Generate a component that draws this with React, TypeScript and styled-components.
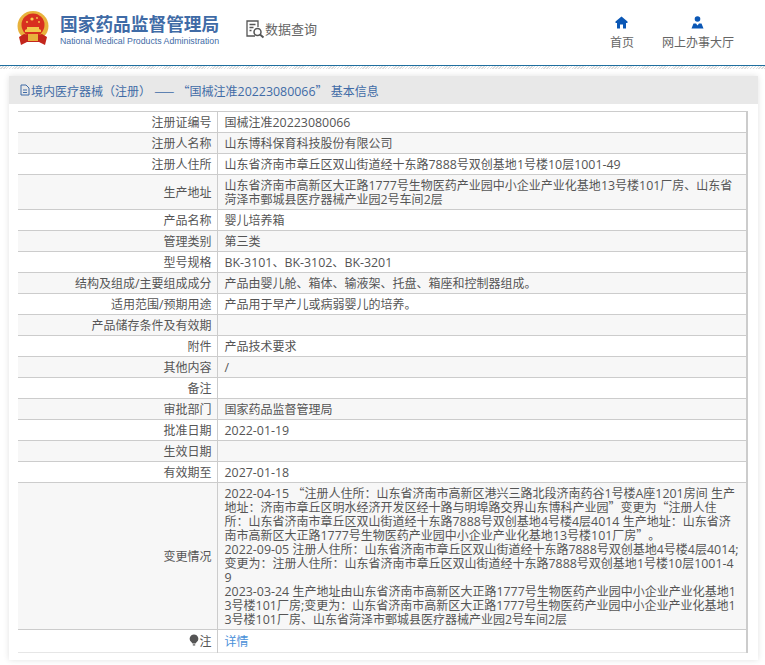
import React from "react";
import styled, { createGlobalStyle } from "styled-components";

const GlobalStyle = createGlobalStyle`
  html, body {
    margin: 0;
    padding: 0;
    background: #fff;
  }
  body {
    font-family: "Noto Sans CJK SC", "Open Sans", sans-serif;
    font-size: 12px;
    color: #555;
    text-spacing-trim: space-all;
  }
`;

const Page = styled.div`
  width: 765px;
  height: 665px;
  overflow: hidden;
`;

const Header = styled.header`
  height: 65px;
  display: flex;
  align-items: flex-start;
  border-bottom: 1px solid #1f6f9f;
`;

const Hatch = styled.div`
  height: 3px;
  background: repeating-linear-gradient(135deg, #ddd 0 1px, #fff 1px 2px);
`;

const Logo = styled.div`
  display: flex;
  align-items: flex-start;
  padding: 11px 0 0 17px;
  width: 245px;
  box-sizing: border-box;
`;

const LogoText = styled.div`
  margin-left: 11px;
`;

const LogoTitle = styled.div`
  font-weight: 700;
  font-size: 17.7px;
  line-height: 24px;
  color: #3f6ba6;
  white-space: nowrap;
`;

const LogoSub = styled.div`
  font-family: "Liberation Sans", sans-serif;
  font-size: 8.75px;
  line-height: 11px;
  margin-top: 1px;
  color: #3f6ba6;
  white-space: nowrap;
`;

const Query = styled.div`
  display: flex;
  align-items: center;
  padding-top: 19px;
  font-size: 13px;
  line-height: 20px;
  color: #666;
`;

const Nav = styled.nav`
  margin-left: auto;
  display: flex;
  padding: 16px 31px 0 0;
  gap: 28px;
`;

const NavItem = styled.div`
  display: flex;
  flex-direction: column;
  align-items: center;
  gap: 4px;
  font-size: 12px;
  line-height: 18px;
  color: #666;
`;

const Card = styled.section`
  margin: 7px 7px 0 9px;
  height: 584px;
  background: #fff;
  box-shadow: 0 0 6px rgba(0, 0, 0, 0.12);
`;

const CardTitle = styled.div`
  height: 28px;
  background: #e8e8e8;
  display: flex;
  align-items: center;
  padding-left: 10px;
  font-size: 12px;
  color: #3f6ba6;
`;

const Table = styled.table`
  margin: 7px 0 0 9px;
  width: 730px;
  border-collapse: collapse;
  table-layout: fixed;
  border-top: 1px solid #ccc;
  border-right: 2px solid #ccc;
`;

const Row = styled.tr<{ $odd: boolean }>`
  background: ${(p) => (p.$odd ? "#f7f7f7" : "#fff")};
  border-bottom: 1px solid #ccc;
`;

const LastRow = styled.tr`
  border-bottom: 1px solid #e6e6e6;
`;

const Label = styled.td`
  width: 199px;
  padding: 3px 5px 3px 0;
  box-sizing: border-box;
  text-align: right;
  line-height: 14px;
  border-right: 1px solid #ccc;
`;

const Value = styled.td`
  padding: 3px 6px 3px 7px;
  line-height: 14px;
  word-break: break-all;
  white-space: pre-line;
`;

const LastLabel = styled(Label)`
  padding: 4px 5px 4px 0;
`;

const LastValue = styled(Value)`
  padding: 4px 6px 4px 7px;
`;

const DetailLink = styled.a`
  color: #4a90d9;
`;

const Latin = styled.span`
  font-family: "Open Sans", sans-serif;
  font-size: 12.4px;
  line-height: 0;
`;

const Txt = ({ children }: { children: string }) => (
  <>
    {children
      .split(/([\x00-\x7f]+)/)
      .map((part, i) => (i % 2 === 1 && part !== "\n" ? <Latin key={i}>{part}</Latin> : part))}
  </>
);

const rows: [string, string][] = [
  ["注册证编号", "国械注准20223080066"],
  ["注册人名称", "山东博科保育科技股份有限公司"],
  ["注册人住所", "山东省济南市章丘区双山街道经十东路7888号双创基地1号楼10层1001-49"],
  ["生产地址", "山东省济南市高新区大正路1777号生物医药产业园中小企业产业化基地13号楼101厂房、山东省菏泽市鄄城县医疗器械产业园2号车间2层"],
  ["产品名称", "婴儿培养箱"],
  ["管理类别", "第三类"],
  ["型号规格", "BK-3101、BK-3102、BK-3201"],
  ["结构及组成/主要组成成分", "产品由婴儿舱、箱体、输液架、托盘、箱座和控制器组成。"],
  ["适用范围/预期用途", "产品用于早产儿或病弱婴儿的培养。"],
  ["产品储存条件及有效期", ""],
  ["附件", "产品技术要求"],
  ["其他内容", "/"],
  ["备注", ""],
  ["审批部门", "国家药品监督管理局"],
  ["批准日期", "2022-01-19"],
  ["生效日期", ""],
  ["有效期至", "2027-01-18"],
  [
    "变更情况",
    "2022-04-15 “注册人住所：山东省济南市高新区港兴三路北段济南药谷1号楼A座1201房间 生产地址：济南市章丘区明水经济开发区经十路与明埠路交界山东博科产业园”变更为“注册人住所：山东省济南市章丘区双山街道经十东路7888号双创基地4号楼4层4014 生产地址：山东省济南市高新区大正路1777号生物医药产业园中小企业产业化基地13号楼101厂房”。\n" +
      "2022-09-05 注册人住所：山东省济南市章丘区双山街道经十东路7888号双创基地4号楼4层4014;变更为：注册人住所：山东省济南市章丘区双山街道经十东路7888号双创基地1号楼10层1001-49\n" +
      "2023-03-24 生产地址由山东省济南市高新区大正路1777号生物医药产业园中小企业产业化基地13号楼101厂房;变更为：山东省济南市高新区大正路1777号生物医药产业园中小企业产业化基地13号楼101厂房、山东省菏泽市鄄城县医疗器械产业园2号车间2层",
  ],
];

const Emblem = () => (
  <svg width="32" height="35" viewBox="0 0 32 35">
    <ellipse cx="16" cy="15" rx="15.5" ry="15" fill="#e8b23c" />
    <circle cx="16" cy="14" r="11.5" fill="#d8301f" />
    <circle cx="15" cy="8" r="1.6" fill="#f5d050" />
    <circle cx="10" cy="11" r="0.9" fill="#f5d050" />
    <circle cx="20" cy="7" r="0.9" fill="#f5d050" />
    <circle cx="22" cy="11" r="0.9" fill="#f5d050" />
    <path d="M8 21h16v-2l-2-1v-2H10v2l-2 1z" fill="#f2c84b" />
    <path d="M2 26l5-3 9 2 9-2 5 3-2 8-6-3h-12l-6 3z" fill="#c3261c" />
    <path d="M11 23h10v7h-10z" fill="#e8b23c" />
  </svg>
);

const SearchIcon = () => (
  <svg width="20" height="20" viewBox="0 0 20 20" fill="none" stroke="#555" strokeWidth="1.3">
    <path d="M10 17H2V2h11v6" />
    <path d="M4.5 5.5h6M4.5 8.5h4M4.5 11.5h2" />
    <circle cx="12.5" cy="13" r="3.5" strokeWidth="1.5" />
    <path d="M15 15.5l3.5 3" strokeWidth="2" />
  </svg>
);

const HomeIcon = () => (
  <svg width="13" height="13" viewBox="0 0 13 13" fill="#0b57b5">
    <path d="M6.5 0.5L0.5 5.5V7h1.5v5.5h3V8.5h3v4h3V7h1.5V5.5z" />
  </svg>
);

const UserIcon = () => (
  <svg width="13" height="13" viewBox="0 0 13 13" fill="#0b57b5">
    <circle cx="6.5" cy="3" r="2.8" />
    <path d="M0.5 12.5L2.5 7.5h2.5l1.5 2 1.5-2h2.5l2 5z" />
  </svg>
);

const DocIcon = () => (
  <svg width="12" height="12" viewBox="0 0 12 12" fill="none" stroke="#3f6ba6" strokeWidth="1">
    <path d="M2 1h5l3 3v7H2z" />
    <path d="M4 6h4M4 8.5h4" />
  </svg>
);

const BulbIcon = () => (
  <svg width="10" height="12" viewBox="0 0 10 12" fill="#555">
    <path d="M5 0.5a4.3 4.3 0 0 1 2.5 7.8L6.5 9.5h-3L2.5 8.3A4.3 4.3 0 0 1 5 0.5z" />
    <path d="M3.8 10.3h2.4v1.2H3.8z" />
  </svg>
);

export default function App() {
  return (
    <Page>
      <GlobalStyle />
      <Header>
        <Logo>
          <Emblem />
          <LogoText>
            <LogoTitle>国家药品监督管理局</LogoTitle>
            <LogoSub>National Medical Products Administration</LogoSub>
          </LogoText>
        </Logo>
        <Query>
          <SearchIcon />
          数据查询
        </Query>
        <Nav>
          <NavItem>
            <HomeIcon />
            首页
          </NavItem>
          <NavItem>
            <UserIcon />
            网上办事大厅
          </NavItem>
        </Nav>
      </Header>
      <Hatch />
      <Card>
        <CardTitle>
          <DocIcon />
          <span>
            <Txt>境内医疗器械（注册） —— “国械注准20223080066” 基本信息</Txt>
          </span>
        </CardTitle>
        <Table>
          <tbody>
            {rows.map(([k, v], i) => (
              <Row key={k} $odd={i % 2 === 1}>
                <Label>
                  <Txt>{k}</Txt>
                </Label>
                <Value>
                  <Txt>{v}</Txt>
                </Value>
              </Row>
            ))}
            <LastRow>
              <LastLabel>
                <BulbIcon />注
              </LastLabel>
              <LastValue>
                <DetailLink>详情</DetailLink>
              </LastValue>
            </LastRow>
          </tbody>
        </Table>
      </Card>
    </Page>
  );
}
